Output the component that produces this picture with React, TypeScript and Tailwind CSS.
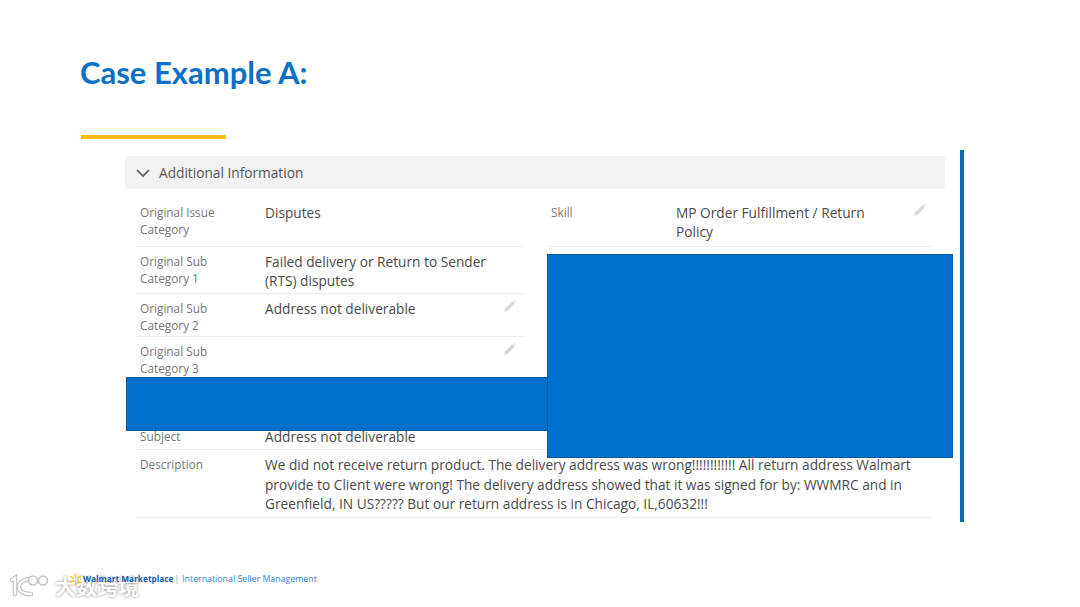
import React from "react";

function Pen() {
  return (
    <svg width="16" height="16" viewBox="0 0 16 16" className="shrink-0">
      <path d="M2 14 L3 10.5 L10.5 3 L13 5.5 L5.5 13 Z" fill="#d9d9d9" />
      <path d="M11.2 2.3 L12.2 1.4 L14.6 3.8 L13.7 4.8 Z" fill="#e2e2e2" />
    </svg>
  );
}

function Row({ label, value, h, pen, wide }: { label?: React.ReactNode; value?: React.ReactNode; h: string; pen?: boolean; wide?: boolean }) {
  return (
    <div className={`flex border-b border-[#ececec] pl-1 pr-[5px] ${h}`}>
      <div className="w-[125px] shrink-0 pt-[1px] text-[11.8px] leading-[17px] text-[#777]">{label}</div>
      <div className={`${wide ? "w-[660px] leading-[19.5px]" : "w-[232px] leading-[19px]"} text-[13.7px] text-[#4a4a4a]`}>{value}</div>
      {pen && <div className="ml-auto -mt-[1px]"><Pen /></div>}
    </div>
  );
}

export default function App() {
  return (
    <div className="relative h-[607px] w-[1080px] overflow-hidden bg-white font-['Open_Sans','Noto_Sans',sans-serif]">
      <h1 className="pl-[80px] pt-[52px] font-['Lato',sans-serif] text-[31px] font-bold leading-[40px] text-[#0a70c8]">Case Example A:</h1>
      <div className="ml-[81px] mt-[43px] h-[4px] w-[145px] bg-[#fbbc0e]" />
      <div className="ml-[125px] mt-[11px] h-[372px] w-[839px] border-r-4 border-[#0a6cb8] pt-[6px]">
        <div className="flex h-[33px] w-[820px] items-center rounded-[3px] bg-[#f3f3f3] pl-[11px] pt-[1px] text-[13.7px] text-[#555]">
          <svg width="14" height="14" viewBox="0 0 14 14" className="mr-[9px]" fill="none" stroke="#555" strokeWidth="1.6">
            <path d="M1 4 L7 10 L13 4" />
          </svg>
          Additional Information
        </div>
        <div className="ml-[11px] mt-[14px] w-[797px]">
          <div className="grid grid-cols-[387px_386px] gap-x-[24px]">
            <div>
              <Row h="h-[44px]" label={<>Original Issue<br />Category</>} value="Disputes" />
              <Row h="h-[47px] pt-[5px]" label={<>Original Sub<br />Category 1</>} value="Failed delivery or Return to Sender (RTS) disputes" />
              <Row h="h-[43px] pt-[5px]" label={<>Original Sub<br />Category 2</>} value="Address not deliverable" pen />
              <Row h="h-[44px] pt-[5px]" label={<>Original Sub<br />Category 3</>} pen />
            </div>
            <div>
              <Row h="h-[44px]" label="Skill" value={<>MP Order Fulfillment / Return<br />Policy</>} pen />
              <Row h="h-[47px] pt-[5px]" pen />
            </div>
          </div>
          <div className="h-[46px]" />
          <Row h="h-[23px]" label="Subject" value="Address not deliverable" wide />
          <Row h="h-[68px] pt-[5px]" label="Description" wide value="We did not receive return product. The delivery address was wrong!!!!!!!!!!!! All return address Walmart provide to Client were wrong! The delivery address showed that it was signed for by: WWMRC and in Greenfield, IN US????? But our return address is in Chicago, IL,60632!!!" />
        </div>
      </div>

      {/* redaction blocks laid over the form */}
      <div className="absolute left-[126px] top-[377px] h-[54px] w-[422px] border border-[#0a5a9e] bg-[#0070cf]" />
      <div className="absolute left-[547px] top-[254px] h-[204px] w-[406px] border border-[#0a5a9e] bg-[#0070cf]" />

      {/* watermark */}
      <div className="absolute left-[8px] top-[570px] flex items-start text-white">
        <svg width="46" height="30" viewBox="0 0 46 30" fill="none" className="mr-[1px]">
          <path d="M4 10 L7 8 V24 M23 9 C15 9 11 13 11 17 C11 21 15 24 23 24" stroke="#bbb" strokeWidth="4.5" strokeLinecap="round" />
          <path d="M4 10 L7 8 V24 M23 9 C15 9 11 13 11 17 C11 21 15 24 23 24" stroke="#fff" strokeWidth="2.5" strokeLinecap="round" />
          <circle cx="25" cy="10.5" r="4.5" stroke="#c4c4c4" strokeWidth="1.6" fill="#fff" />
          <circle cx="35" cy="10.5" r="4.5" stroke="#c4c4c4" strokeWidth="1.6" fill="#fff" />
        </svg>
        <span className="mt-[2px] font-['Noto_Sans_CJK_SC',sans-serif] text-[21px] font-bold leading-[26px] [text-shadow:0_0_3px_#888]">大数跨境</span>
      </div>

      {/* footer */}
      <div className="absolute left-[69px] top-[572px] flex items-center leading-[14px]">
        <svg width="13" height="13" viewBox="0 0 14 14" className="mr-[1px]" stroke="#ffc220" strokeWidth="1.6" strokeLinecap="round">
          <path d="M7 1 V4.5 M7 9.5 V13 M1.8 4 L4.8 5.7 M9.2 8.3 L12.2 10 M1.8 10 L4.8 8.3 M9.2 5.7 L12.2 4" />
        </svg>
        <span className="text-[8.3px] font-bold text-[#0a62b0]">Walmart Marketplace</span>
        <span className="ml-[1px] text-[8.5px] text-[#6d9fcc]">|</span>
        <span className="ml-[3px] text-[8.8px] text-[#2f86cf]">International Seller Management</span>
      </div>
    </div>
  );
}
